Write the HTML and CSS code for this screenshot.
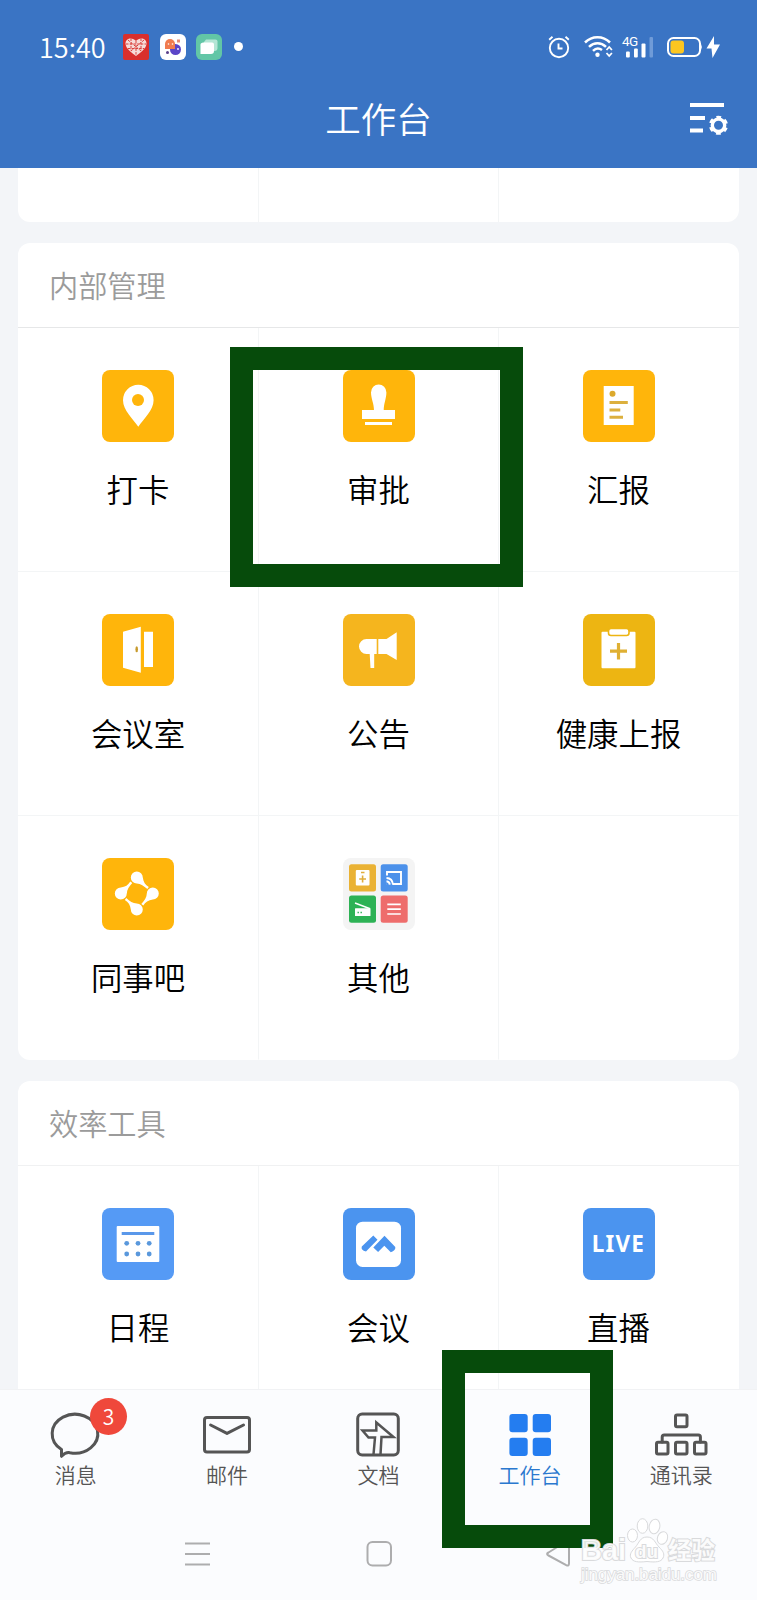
FILE: index.html
```
<!DOCTYPE html>
<html lang="zh-CN">
<head>
    <meta charset="UTF-8">
    <meta name="viewport" content="width=device-width, initial-scale=1.0">
    <title>工作台</title>
    <link rel="stylesheet" href="styles.css">
</head>
<body>
    <div class="screen">
        <header class="header">
            <!-- Status bar -->
            <div class="status-bar">
                <span class="time">15:40</span>
                <div class="notifications">
                    <svg width="26" height="26" viewBox="0 0 26 26">
                        <rect width="26" height="26" rx="2" fill="#d92f2c"/>
                        <path d="M13 22C9 19 2.5 14.5 2.5 9.5C2.5 3.5 10 3 13 7C16 3 23.5 3.5 23.5 9.5C23.5 14.5 17 19 13 22z" fill="#f6dcd8"/>
                        <path d="M3 10h20M5 14.5h16M8 4.5v12M13 7v14M18 4.5v12M5 6l13 11M21 6L8 17" stroke="#d9413c" stroke-width="1" stroke-dasharray="2.5 1.2" fill="none"/>
                    </svg>
                    <svg width="26" height="26" viewBox="0 0 26 26">
                        <rect width="26" height="26" rx="6" fill="#fff"/>
                        <circle cx="15.5" cy="15.5" r="5.5" fill="#5b45c8"/>
                        <path d="M5 15v-5a5 5 0 0 1 10 0v5z" fill="#f07b4f"/>
                        <path d="M17 5.5h3v3h-3z" fill="#e58a77"/>
                        <circle cx="7.5" cy="18.5" r="1.5" fill="#5a3f8a"/>
                        <circle cx="8.5" cy="10" r=".8" fill="#fff"/>
                        <circle cx="12.5" cy="10" r=".8" fill="#fff"/>
                        <circle cx="18" cy="15" r=".9" fill="#fff"/>
                    </svg>
                    <svg width="26" height="26" viewBox="0 0 26 26">
                        <rect width="26" height="26" rx="6" fill="#62c6a6"/>
                        <path d="M10 5.500h9.500a2 2 0 0 1 2 2V14a3 3 0 0 1-3 3H8V8z" fill="#b4e6d5"/>
                        <path d="M7 8.500h9a2 2 0 0 1 2 2v6.500a3 3 0 0 1-3 3H4.500v-8a3 3 0 0 1 2.500-3.500z" fill="#fff"/>
                    </svg>
                    <span class="dot"></span>
                </div>
                <div class="indicators">
                    <svg class="alarm" width="22" height="24" viewBox="0 0 22 24" fill="none" stroke="#fff" stroke-width="1.9">
                        <circle cx="11" cy="13" r="9.2"/>
                        <path d="M10.500 8.500v5h4M1.200 4.800l3.300-3M20.800 4.800l-3.300-3"/>
                    </svg>
                    <svg class="wifi" width="29" height="24" viewBox="0 0 29 24" fill="none" stroke="#fff" stroke-width="2.5">
                        <path d="M1 7.500C8 .5 19 .5 26 7.500M5 11.800c5-4.800 12-4.800 17 0M9 15.800c2.500-2.500 6-3 9-.8"/>
                        <circle cx="13.5" cy="19.8" r="2.2" fill="#fff" stroke="none"/>
                        <path d="M22.500 15l2.700-3 2.700 3M22.500 18l2.700 3 2.700-3" stroke-width="1.8"/>
                    </svg>
                    <div class="signal">
                        <span class="network">4G</span>
                        <svg width="32" height="24" viewBox="0 0 32 24" fill="#fff">
                            <rect x="4" y="16.5" width="3.8" height="6" rx="1"/>
                            <rect x="12" y="13.5" width="3.8" height="9" rx="1"/>
                            <rect x="19.5" y="8.5" width="4" height="14" rx="1"/>
                            <rect x="27.5" y="2" width="3.5" height="20.5" rx="1" fill="#6f9bd8"/>
                        </svg>
                    </div>
                    <svg class="battery" width="54" height="22" viewBox="0 0 54 22">
                        <rect x="1" y="2" width="32" height="18" rx="5.5" fill="none" stroke="#fff" stroke-width="2"/>
                        <rect x="3.5" y="4.5" width="13.5" height="13" rx="3" fill="#fcc620"/>
                        <path d="M34 8q1.800 3 0 6z" fill="#fff"/>
                        <path d="M47 0l-7.500 12.500h5L45.500 22 53 8.500h-6z" fill="#fff"/>
                    </svg>
                </div>
            </div>

            <!-- Title bar -->
            <div class="title-bar">
                <h1>工作台</h1>
                <svg class="settings" width="40" height="34" viewBox="0 0 40 34" fill="none" stroke="#fff">
                    <path d="M0 3h34M0 16h15M0 28.500h13" stroke-width="4.2"/>
                    <circle cx="28.5" cy="23.3" r="6.2" stroke-width="3.4"/>
                    <circle cx="28.5" cy="23.3" r="8.2" stroke-width="2.6" stroke-dasharray="4.6 3.99" stroke-dashoffset="2.3" transform="rotate(30 28.5 23.3)"/>
                </svg>
            </div>
        </header>

        <main class="content">
            <section class="card card-cut">
                <div class="cut-cell"></div>
                <div class="cut-cell"></div>
                <div class="cut-cell"></div>
            </section>

            <section class="card">
                <h2>内部管理</h2>
                <div class="grid">
                    <div class="cell">
                        <svg class="icon amber" viewBox="0 0 72 72">
                            <path d="M36.300 56.700C31 49 21 40 21 30.200a15.300 15.500 0 0 1 30.600 0C51.600 40 41.600 49 36.300 56.700z" fill="#fff"/>
                            <circle cx="36" cy="30" r="6" fill="#ffb50b"/>
                        </svg>
                        <span>打卡</span>
                    </div>
                    <div class="cell">
                        <svg class="icon amber" viewBox="0 0 72 72" fill="#fff">
                            <path d="M31 40.500c0-7-3-12-3-18a7.700 8 0 0 1 15.400 0c0 6-2.700 11-2.700 18z"/>
                            <path d="M19 40h33v9H19zM22 52h27v3H22z"/>
                        </svg>
                        <span>审批</span>
                    </div>
                    <div class="cell">
                        <svg class="icon amber" viewBox="0 0 72 72">
                            <rect x="20.7" y="16" width="30" height="39" fill="#fff"/>
                            <circle cx="29.5" cy="23.7" r="3" fill="#dca92c"/>
                            <path d="M26.500 32.500h18.300M26.500 40h10.800M26.500 47.300h13.500" stroke="#dcb03e" stroke-width="3"/>
                        </svg>
                        <span>汇报</span>
                    </div>
                    <div class="cell">
                        <svg class="icon amber" viewBox="0 0 72 72" fill="#fff">
                            <path d="M21 17.700l17.800-5v46L21 53.700zM42 17.700h9V53h-9z"/>
                            <ellipse cx="34.7" cy="35.3" rx="1.3" ry="3" fill="#c79a2c"/>
                        </svg>
                        <span>会议室</span>
                    </div>
                    <div class="cell">
                        <svg class="icon honey" viewBox="0 0 72 72" fill="#fff">
                            <path d="M33.700 25H23.500a7.500 7.500 0 0 0 0 15h3.200l.8 14h3.700V40h2.500zM35.300 25h8.200l10.200-6.700V46l-10.200-6h-8.200z"/>
                        </svg>
                        <span>公告</span>
                    </div>
                    <div class="cell">
                        <svg class="icon mustard" viewBox="0 0 72 72">
                            <rect x="18.5" y="17.7" width="34" height="36.5" rx="1" fill="#fff"/>
                            <rect x="25.5" y="14.500" width="20.500" height="7" rx="2.500" fill="#fff" stroke="#edb512" stroke-width="1.6"/>
                            <path d="M35.500 29v16.500M27 37.200h17" stroke="#dfb033" stroke-width="3.2"/>
                        </svg>
                        <span>健康上报</span>
                    </div>
                    <div class="cell">
                        <svg class="icon amber" viewBox="0 0 72 72" fill="#fff">
                            <g transform="translate(34.8 35.5)">
                                <path id="drop" d="M-6-16a6 6 0 0 1 12 0c.5 4.500 2.500 7.500 6 9.500l-1.500 2C7-7.500 4-10 0-10a6 6 0 0 1-6-6z"/>
                                <use href="#drop" transform="rotate(90)"/>
                                <use href="#drop" transform="rotate(180)"/>
                                <use href="#drop" transform="rotate(270)"/>
                            </g>
                        </svg>
                        <span>同事吧</span>
                    </div>
                    <div class="cell">
                        <svg class="icon folder" viewBox="0 0 72 72">
                            <rect x="6" y="6.3" width="27" height="27.2" rx="2.5" fill="#eab234"/>
                            <rect x="37.7" y="6.3" width="27" height="27.2" rx="2.5" fill="#4c91ea"/>
                            <rect x="6" y="37.5" width="27" height="27.2" rx="2.5" fill="#2db255"/>
                            <rect x="37.7" y="37.5" width="27" height="27.2" rx="2.5" fill="#ee6d6c"/>
                            <rect x="12.8" y="12" width="13.7" height="15.5" rx="1" fill="#fff"/>
                            <path d="M19.600 17.500v7M16.200 21h6.800M18 14.500h3.500" stroke="#e0ad3c" stroke-width="1.6"/>
                            <path d="M44 17.500V14h14v12h-8M43.500 26.300h.1M43.500 23.200q3 .3 3.300 3.500M43.500 20q6 .3 6.500 6.700" fill="none" stroke="#fff" stroke-width="1.9"/>
                            <path d="M12 45l15 5.700" stroke="#fff" stroke-width="1.5"/>
                            <rect x="12" y="50.3" width="15.5" height="7.7" rx=".5" fill="#fff"/>
                            <path d="M14.500 54.500h1.400M17.500 54.500h1.400" stroke="#2db255" stroke-width="1.5"/>
                            <path d="M44.300 46.300h13.500M44.300 51.200h13.500M44.300 56h13.500" stroke="#fff" stroke-width="1.7"/>
                        </svg>
                        <span>其他</span>
                    </div>
                    <div class="cell"></div>
                </div>
            </section>

            <section class="card card-last">
                <h2>效率工具</h2>
                <div class="grid">
                    <div class="cell">
                        <svg class="icon sky" viewBox="0 0 72 72">
                            <rect x="14.7" y="18" width="42.6" height="36" rx="1" fill="#fff"/>
                            <path d="M19.700 25.500h32.600" stroke="#5a98ea" stroke-width="3"/>
                            <g fill="#5a98dc">
                                <circle cx="24.7" cy="35.3" r="2.4"/>
                                <circle cx="36" cy="35.3" r="2.4"/>
                                <circle cx="47.2" cy="35.3" r="2.4"/>
                                <circle cx="24.7" cy="46" r="2.4"/>
                                <circle cx="36" cy="46" r="2.4"/>
                                <circle cx="47.2" cy="46" r="2.4"/>
                            </g>
                        </svg>
                        <span>日程</span>
                    </div>
                    <div class="cell">
                        <svg class="icon blue" viewBox="0 0 72 72">
                            <rect x="13" y="13.7" width="45" height="45.3" rx="6.5" fill="#fff"/>
                            <path d="M30.300 27.500l4.200 4.200L23 43.500q-5.500-1.500-4.200-5zM41.500 27.800L52.300 39q.5 3.500-4.500 5.300l-6.500-6.500-6.200 6.300-4.800-4.600z" fill="#4b94ef"/>
                        </svg>
                        <span>会议</span>
                    </div>
                    <div class="cell">
                        <div class="icon blue live">LIVE</div>
                        <span>直播</span>
                    </div>
                </div>
            </section>
        </main>

        <!-- Bottom tabs -->
        <nav class="tabs">
            <div class="tab">
                <svg viewBox="0 0 60 50">
                    <path d="M15.500 40.500A22.800 19.500 0 1 1 24 43.800q-4-1-8.500 3.500z"/>
                </svg>
                <span>消息</span>
                <b class="badge">3</b>
            </div>
            <div class="tab">
                <svg viewBox="0 0 60 50">
                    <rect x="7.5" y="8.500" width="45" height="34.5" rx="2.5"/>
                    <path d="M13.600 16L30 24.400 46.500 16"/>
                </svg>
                <span>邮件</span>
            </div>
            <div class="tab">
                <svg viewBox="0 0 60 50">
                    <rect x="9.7" y="5" width="40.6" height="41" rx="4.5"/>
                    <path d="M25.500 45.500L27 28.500h-6.500l-6-7h13.800V13.500L45.500 28H33.500l-1 17.500" stroke-width="2.5" stroke-linejoin="miter"/>
                </svg>
                <span>文档</span>
            </div>
            <div class="tab active">
                <svg viewBox="0 0 60 50">
                    <rect x="9.4" y="5" width="18.3" height="18.3" rx="3"/>
                    <rect x="32.7" y="5" width="18.3" height="18.3" rx="3"/>
                    <rect x="9.4" y="28.7" width="18.3" height="18.3" rx="3"/>
                    <rect x="32.7" y="28.7" width="18.3" height="18.3" rx="3"/>
                </svg>
                <span>工作台</span>
            </div>
            <div class="tab">
                <svg viewBox="0 0 60 50">
                    <rect x="24.5" y="6" width="11.5" height="11.7" rx="1.5"/>
                    <rect x="5.5" y="33.3" width="11.5" height="11.7" rx="1.5"/>
                    <rect x="24.5" y="33.3" width="11.5" height="11.7" rx="1.5"/>
                    <rect x="43.5" y="33.3" width="11.5" height="11.7" rx="1.5"/>
                    <path d="M11.200 33v-5a2 2 0 0 1 2-2h34.200a2 2 0 0 1 2 2v5"/>
                </svg>
                <span>通讯录</span>
            </div>
        </nav>

        <!-- System navigation keys -->
        <div class="system-nav">
            <svg width="28" height="28" viewBox="0 0 28 28"><path d="M1 3.500h25M1 14h25M1 24.500h25"/></svg>
            <svg width="28" height="28" viewBox="0 0 28 28"><rect x="2.5" y="2" width="23.5" height="23.5" rx="5"/></svg>
            <svg width="28" height="28" viewBox="0 0 28 28"><path d="M24 3v20.500q0 3-2.800 1.600L3.500 15.500q-2.800-1.500 0-3L21.200 1.500q2.800-1.500 2.800 1.500z"/></svg>
        </div>

        <!-- Highlight frames -->
        <div class="frame frame-approval"></div>
        <div class="frame frame-workbench"></div>

        <svg class="watermark" width="150" height="80" viewBox="0 0 150 80">
            <g>
                <ellipse cx="11.500" cy="27.5" rx="5" ry="6.5"/>
                <ellipse cx="21.500" cy="18" rx="5.3" ry="7.3"/>
                <ellipse cx="33.500" cy="18.500" rx="5.3" ry="7.3" transform="rotate(12 33.5 18.5)"/>
                <ellipse cx="41.500" cy="30" rx="5" ry="6.5" transform="rotate(20 41.5 30)"/>
                <path d="M26 29c7 0 8 6 12 10s6 7 4 11-7 4.500-16 3.500c-9 1-14 .5-16-3.500s1-7 4.500-11S19 29 26 29z"/>
            </g>
            <text class="mark-bai" x="-40" y="52" font-size="29" textLength="45">Bai</text>
            <text x="14" y="50" font-size="19" textLength="23">du</text>
            <text class="mark-cjk" x="47" y="51" font-size="23.5" textLength="47">经验</text>
            <text class="mark-url" x="-40" y="72" font-size="17" textLength="136">jingyan.baidu.com</text>
        </svg>
    </div>
</body>
</html>
```
FILE: styles.css
```
/* CSS styles */
* {
    box-sizing: border-box;
}
body {
    font-family: "Noto Sans CJK SC", "Noto Sans", sans-serif;
    font-weight: 350;
    margin: 0;
    padding: 0;
    background-color: #f3f5f8;
}
.screen {
    position: relative;
    width: 757px;
    height: 1600px;
    display: flex;
    flex-direction: column;
    overflow: hidden;
}
svg {
    display: block;
    flex: none;
}

/* Header */
.header {
    flex: none;
    height: 168px;
    background-color: #3a74c4;
    color: #fff;
}
.status-bar {
    display: flex;
    align-items: center;
    height: 93px;
    padding: 0 36px 0 39px;
}
.time {
    width: 84px;
    font-size: 27px;
    line-height: 30px;
}
.notifications {
    display: flex;
    align-items: center;
    gap: 10.5px;
}
.dot {
    width: 9px;
    height: 9px;
    margin-left: 1px;
    border-radius: 50%;
    background-color: #fff;
}
.indicators {
    display: flex;
    align-items: center;
    margin-left: auto;
}
.wifi {
    margin-left: 14px;
}
.signal {
    position: relative;
    margin: 0 13px 0 9px;
}
.network {
    position: absolute;
    left: 0;
    top: 0;
    font-family: Roboto, sans-serif;
    font-size: 13.5px;
    font-weight: 400;
    line-height: 13px;
    letter-spacing: -0.5px;
}
.title-bar {
    display: flex;
    align-items: center;
    justify-content: center;
    height: 52px;
    position: relative;
}
.title-bar h1 {
    margin: 0;
    font-size: 35.5px;
    font-weight: 350;
    line-height: 50px;
    padding-bottom: 2px;
}
.settings {
    position: absolute;
    right: 27px;
    top: 9px;
}

/* Cards */
.content {
    height: 1221px;
    flex: none;
    overflow: hidden;
    padding-left: 18px;
}
.card {
    width: 721px;
    margin-bottom: 21px;
    background-color: #fff;
    border-radius: 12px;
}
.card-cut {
    display: grid;
    grid-template-columns: 241px 240px 240px;
    height: 54px;
    border-radius: 0 0 12px 12px;
}
.cut-cell + .cut-cell {
    border-left: 1px solid #f3f5f6;
    margin-left: -1px;
}
.card h2 {
    margin: 0;
    height: 85px;
    padding-left: 31px;
    border-bottom: 1px solid #e6e7e8;
    color: #9b9b9b;
    font-size: 29.2px;
    font-weight: 350;
    line-height: 82px;
}
.card-last h2 {
    border-color: #f0f1f2;
}
.grid {
    display: grid;
    grid-template-columns: 241px 240px 240px;
    grid-auto-rows: 244px;
}
.cell {
    display: flex;
    flex-direction: column;
    align-items: center;
    padding-top: 42px;
    border-right: 1px solid #f3f5f6;
    border-bottom: 1px solid #f3f5f6;
}
.cell:nth-child(3n) {
    border-right-color: transparent;
}
.cell:nth-child(n+7) {
    border-bottom-color: transparent;
}
.cell span {
    margin-top: 24px;
    color: #000;
    font-size: 31.4px;
    line-height: 45px;
}
.icon {
    width: 72px;
    height: 72px;
    flex: none;
    border-radius: 8px;
}
.amber {
    background-color: #ffb50b;
}
.honey {
    background-color: #f5b51e;
}
.mustard {
    background-color: #edb512;
}
.folder {
    background-color: #f4f4f4;
}
.sky {
    background-color: #559af5;
}
.blue {
    background-color: #4b94ef;
}
.live {
    color: #fff;
    font-family: "Noto Sans", sans-serif;
    font-size: 22.5px;
    font-weight: 700;
    letter-spacing: 1.2px;
    line-height: 71px;
    text-align: center;
}

/* Bottom tabs */
.tabs {
    flex: none;
    display: grid;
    grid-template-columns: repeat(5, 1fr);
    height: 119px;
    padding-top: 19px;
    background-color: #fbfcfe;
    border-top: 1px solid #f1f2f4;
}
.tab {
    position: relative;
    display: flex;
    flex-direction: column;
    align-items: center;
    color: #555;
    font-size: 21px;
}
.tab svg {
    width: 60px;
    height: 50px;
    fill: none;
    stroke: #555;
    stroke-width: 3;
    stroke-linejoin: round;
    stroke-linecap: round;
}
.tab span {
    line-height: 30px;
}
.tab.active {
    color: #2a78cf;
}
.tab.active svg {
    fill: #247df0;
    stroke: none;
}
.badge {
    position: absolute;
    left: 90px;
    top: -11px;
    width: 37px;
    height: 37px;
    border-radius: 50%;
    background-color: #ef483b;
    color: #fff;
    font-size: 21px;
    font-weight: 350;
    line-height: 36px;
    text-align: center;
}
.system-nav {
    flex: 1;
    display: flex;
    align-items: center;
    justify-content: space-between;
    padding: 0 184px 1px;
    background-color: #fbfcfe;
}
.system-nav svg {
    fill: none;
    stroke: #adadae;
    stroke-width: 2;
}

/* Overlays */
.frame {
    position: absolute;
    border: 23px solid #064b0b;
}
.frame-approval {
    left: 230px;
    top: 347px;
    width: 293px;
    height: 240px;
}
.frame-workbench {
    left: 442px;
    top: 1350px;
    width: 171px;
    height: 198px;
}
.watermark {
    position: absolute;
    left: 621px;
    top: 1508px;
    overflow: visible;
    fill: rgba(255, 255, 255, 0.9);
    stroke: #d9dadc;
    stroke-width: 1;
}
.watermark text {
    font-family: "Liberation Sans", sans-serif;
    font-weight: 700;
    paint-order: stroke;
    stroke-width: 2px;
}
.watermark .mark-cjk {
    font-family: "Noto Sans CJK SC", sans-serif;
}
.watermark .mark-url {
    font-weight: 400;
    stroke-width: 1.5px;
}
```
